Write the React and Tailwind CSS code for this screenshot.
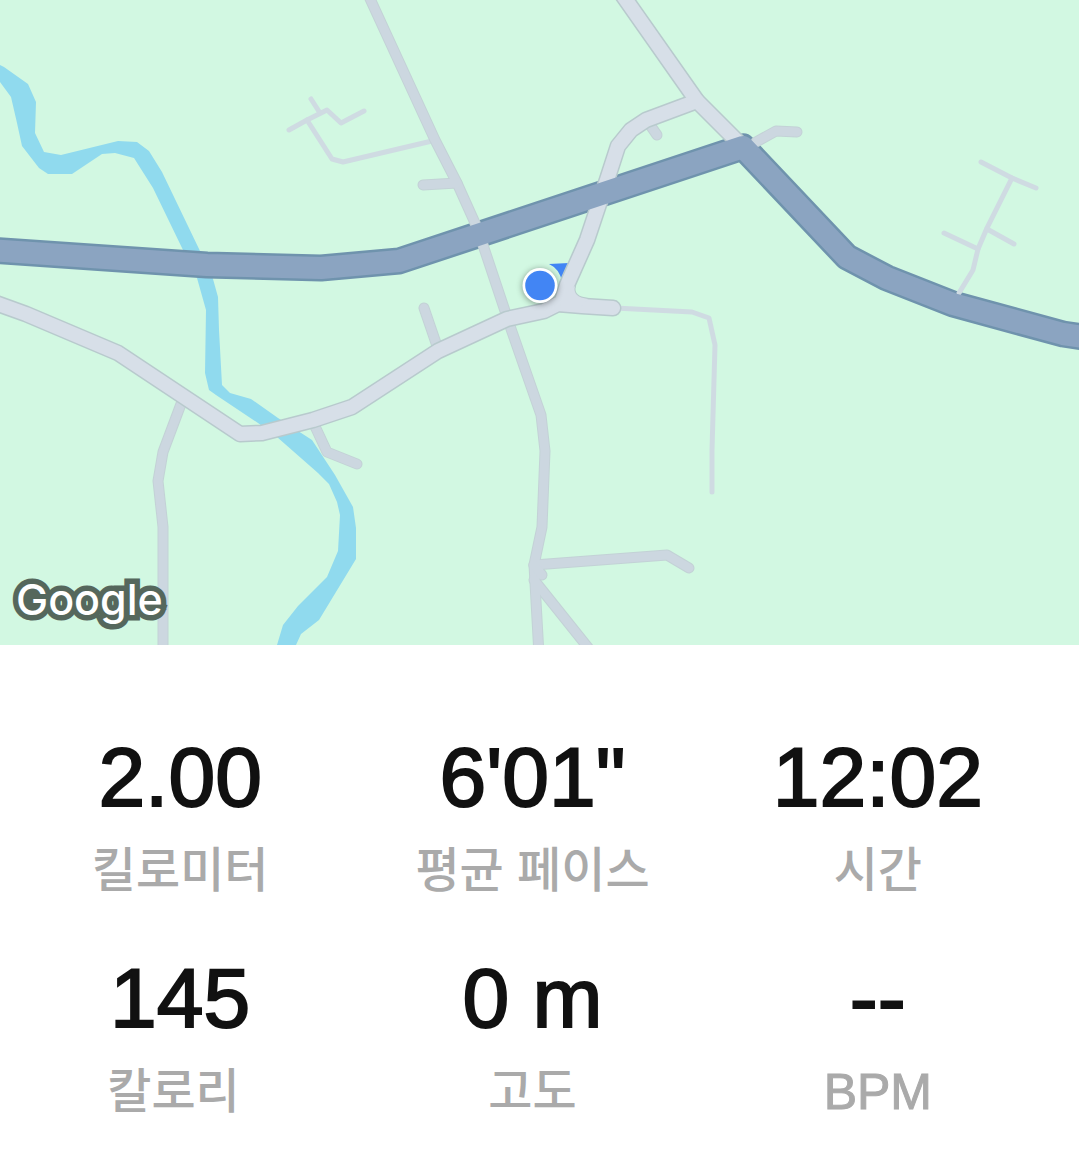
import React from 'react';
import { clsx } from 'clsx';

const STATS = [
  { value: '2.00', label: '킬로미터' },
  { value: `6'01"`, label: '평균 페이스' },
  { value: '12:02', label: '시간' },
  { value: '145', label: '칼로리 ' },
  { value: '0 m', label: '고도' },
  { value: '--', label: 'BPM', latin: true },
];

const RIVER =
  'M0 65L4 67L28 84L36 102L35 133L44 152L61 155L118 141L137 142L149 151L162 172L200 251L213 279L218 297L219 330L222 385L230 393L251 399L278 418L312 440L335 475L353 507L356 528L356 559L319 620L301 634L296 645L277 645L283 625L298 606L327 577L338 551L340 515L337 502L329 484L318 473L277 437L258 423L216 395L209 390L205 373L206 310L197 278L183 250L153 188L134 158L115 153L102 154L72 174L48 174L39 168L22 146L17 123L11 97L0 82Z';

const HIGHWAY =
  'M-10 250L207 265L321 268L399 261L743 147L847 257L887 278L953 304L1063 334L1090 338';

const MAIN_ROADS = [
  'M-10 301L26 314L118 353L240 434L262 433L313 420L352 407L438 351L507 319L544 311L558 304L582 306L613 308',
  'M561 304L567 285L587 240L607 180L618 146L631 130L646 120L697 101',
  'M619 -10L697 101L738 142',
];

const MINOR_ROADS = [
  'M366 -10L435 140L457 183L475 223L483 245L510 326L541 415L545 451L542 527L534 565L539 655',
  'M423 185L457 183',
  'M424 308L437 346',
  'M181 404L163 452L158 481L163 527L163 655',
  'M313 422L327 452L357 464',
  'M534 565L667 555L689 568',
  'M534 565L542 575',
  'M534 580L594 655',
  'M648 122L657 135',
  'M756 142L776 131L797 132',
];

const LANES = [
  'M289 130L307 120L327 110L341 123L364 111',
  'M311 99L320 113',
  'M307 120L332 159L343 162L432 141',
  'M981 162L1012 178L1036 188',
  'M1012 178L987 228L978 249L973 270L959 293',
  'M944 233L978 249',
  'M987 229L1014 244',
  'M615 308L692 312L709 318L715 345L712 450L712 492',
];

// inner curve where the two main roads meet
const JUNCTION = 'M575 286Q572 297 588 299L580 308L560 308L562 296Z';

function Roads({ paths, className, width }) {
  return (
    <g className={className} strokeWidth={width}>
      {paths.map((d) => (
        <path key={d} d={d} />
      ))}
    </g>
  );
}

function RouteMap() {
  return (
    <section className="relative">
      <svg
        viewBox="0 0 1079 645"
        className="block w-full bg-[#d2f8e2]"
        fill="none"
        strokeLinecap="round"
        strokeLinejoin="round"
        aria-hidden="true"
      >
        <path d={RIVER} className="fill-[#90daee]" />
        <path d={HIGHWAY} className="stroke-[#6f93ad]" strokeWidth="27" />

        <Roads paths={LANES} className="stroke-[#cfdbe2]" width={5} />
        <Roads paths={MINOR_ROADS} className="stroke-[#c3d2d6]" width={11} />
        <Roads paths={MINOR_ROADS} className="stroke-[#ccd7e0]" width={9} />

        <path
          d="M549 264L569 263L562 282Q560 269 549 264Z"
          className="fill-[#4285f4]"
        />
        <Roads paths={MAIN_ROADS} className="stroke-[#b8cacd]" width={17} />
        <path d={JUNCTION} className="stroke-[#b8cacd]" strokeWidth="2" />
        <Roads paths={MAIN_ROADS} className="stroke-[#d7dfe8]" width={14} />
        <path d={JUNCTION} className="fill-[#d7dfe8]" />

        <path d={HIGHWAY} className="stroke-[#8ba4c1]" strokeWidth="22" />

        <circle
          cx="540"
          cy="285.5"
          r="17.5"
          className="fill-white drop-shadow-[0_1px_3px_rgba(0,0,0,0.4)]"
        />
        <circle cx="540" cy="285.5" r="14.8" className="fill-[#4285f4]" />
      </svg>
      <span className="absolute bottom-4 left-4 font-['Inter',sans-serif] text-[43px] leading-[60px] font-medium text-white [paint-order:stroke_fill] [-webkit-text-stroke:11px_#55675c]">
        Google
      </span>
    </section>
  );
}

function Stat({ value, label, latin = false }) {
  return (
    <div className="flex flex-col-reverse items-center">
      <dt
        className={clsx(
          'leading-[84px] font-medium whitespace-pre text-[#aaaaaa]',
          latin ? 'text-[50px] [-webkit-text-stroke:1px_#aaaaaa]' : 'text-[48px]'
        )}
      >
        {label}
      </dt>
      <dd className="text-[84px] leading-[104px] text-[#111111] [-webkit-text-stroke:2px_#111111]">
        {value}
      </dd>
    </div>
  );
}

export default function App() {
  return (
    <main className="min-h-screen bg-white font-['Liberation_Sans','Noto_Sans_CJK_KR',sans-serif]">
      <RouteMap />
      <dl className="grid grid-cols-[360fr_344fr_346fr] gap-y-[33px] pt-20 pr-7 pb-5">
        {STATS.map((stat) => (
          <Stat key={stat.label} {...stat} />
        ))}
      </dl>
    </main>
  );
}
